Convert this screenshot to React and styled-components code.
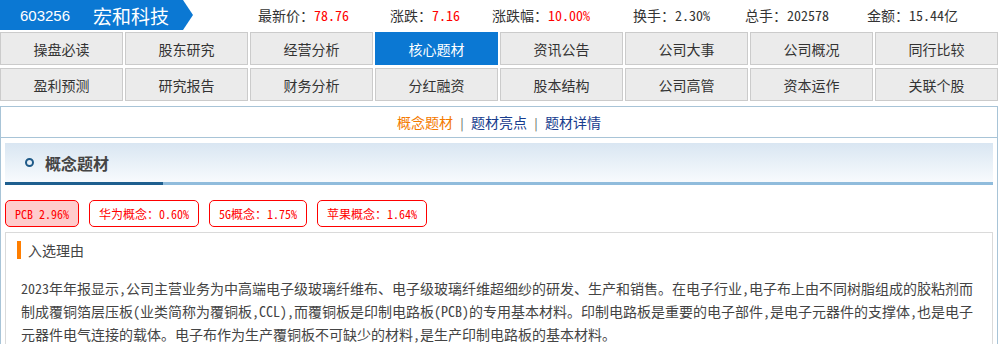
import React from "react";
import styled, { createGlobalStyle } from "styled-components";

const GlobalStyle = createGlobalStyle`
  body {
    margin: 0;
    background: #fff;
    color: #333;
    font-family: "Noto Sans CJK SC", "Noto Sans", sans-serif;
    font-size: 14px;
    font-feature-settings: "hwid";
  }
`;

const stats = [
  { label: "最新价", value: "78.76", red: true, w: 132 },
  { label: "涨跌", value: "7.16", red: true, w: 102 },
  { label: "涨跌幅", value: "10.00%", red: true, w: 141 },
  { label: "换手", value: "2.30%", w: 112 },
  { label: "总手", value: "202578", w: 122 },
  { label: "金额", value: "15.44亿", w: 120 },
];

const navItems = [
  "操盘必读", "股东研究", "经营分析", "核心题材", "资讯公告", "公司大事", "公司概况", "同行比较",
  "盈利预测", "研究报告", "财务分析", "分红融资", "股本结构", "公司高管", "资本运作", "关联个股",
];

const tags = [
  { text: "PCB 2.96%", active: true },
  { text: "华为概念：0.60%" },
  { text: "5G概念：1.75%" },
  { text: "苹果概念：1.64%" },
];

const HeaderBar = styled.div`
  display: flex;
  align-items: center;
  height: 30px;
`;

const Banner = styled.div`
  display: flex;
  align-items: center;
  width: 193px;
  height: 30px;
  background: #0b78d3;
  color: #fff;
  clip-path: polygon(0 0, 183px 0, 100% 50%, 183px 100%, 0 100%);
  flex-shrink: 0;
`;

const Code = styled.span`
  font-family: "Liberation Sans", Arial, sans-serif;
  font-size: 15px;
  margin-left: 20px;
`;

const Name = styled.span`
  font-size: 19px;
  margin-left: 23px;
`;

const Stats = styled.div`
  display: flex;
  margin-left: 65px;
`;

const Stat = styled.div`
  width: ${(p) => p.$w}px;
  white-space: nowrap;
  color: #333;
`;

const StatValue = styled.span`
  color: ${(p) => (p.$red ? "#f00" : "#333")};
`;

const Nav = styled.div`
  display: grid;
  grid-template-columns: repeat(8, 123px);
  grid-auto-rows: 33px;
  column-gap: 2px;
  row-gap: 3px;
  margin-top: 2px;
`;

const NavButton = styled.div`
  display: flex;
  align-items: center;
  justify-content: center;
  box-sizing: border-box;
  border: 1px solid ${(p) => (p.$active ? "#0b78d3" : "#cbcbcb")};
  background: ${(p) => (p.$active ? "#0b78d3" : "#ebebeb")};
  color: ${(p) => (p.$active ? "#fff" : "#333")};
  font-size: 14px;
`;

const Panel = styled.div`
  margin-top: 5px;
  width: 998px;
  box-sizing: border-box;
  border: 1px solid #a8c4d7;
  border-bottom: none;
  height: 238px;
`;

const SubTabs = styled.div`
  display: flex;
  align-items: center;
  justify-content: center;
  height: 30px;
  border-bottom: 1px solid #a8c4d7;
`;

const SubTab = styled.span`
  color: ${(p) => (p.$active ? "#f47a00" : "#173c8e")};
`;

const Divider = styled.span`
  color: #555;
  margin: 0 6px;
  font-size: 12px;
`;

const SectionHead = styled.div`
  display: flex;
  align-items: center;
  height: 42px;
  box-sizing: border-box;
  padding: 0 0 3px 20px;
  margin: 5px 4px 0;
  background:
    linear-gradient(#1f5f8f, #1f5f8f) left bottom / 158px 3px no-repeat,
    linear-gradient(#90bcdc, #90bcdc) left bottom / 100% 3px no-repeat,
    linear-gradient(#d9e6f2, #fafcfe);
`;

const Ring = styled.span`
  width: 9px;
  height: 9px;
  box-sizing: border-box;
  border: 2.5px solid #1f5a88;
  border-radius: 50%;
`;

const SectionTitle = styled.span`
  margin-left: 11px;
  font-size: 16px;
  font-weight: bold;
  color: #444;
`;

const TagRow = styled.div`
  display: flex;
  gap: 10px;
  margin: 15px 0 0 4px;
`;

const Tag = styled.span`
  height: 27px;
  line-height: 25px;
  box-sizing: border-box;
  padding: 0 9px;
  border: 1px solid #f00;
  border-radius: 5px;
  background: ${(p) => (p.$active ? "#ffcccc" : "#fff")};
  color: #f00;
  font-size: 12px;
  white-space: nowrap;
`;

const ReasonBox = styled.div`
  margin: 5px 4px 0;
  border: 1px solid #dadada;
  border-bottom: none;
  padding: 8px 11px 0;
  height: 120px;
`;

const ReasonHead = styled.div`
  display: flex;
  align-items: center;
  height: 18px;
  color: #444;
  font-size: 14px;
`;

const Bar = styled.span`
  width: 4px;
  height: 18px;
  background: #ff7e00;
  margin-right: 7px;
`;

const Paragraph = styled.p`
  margin: 18px 0 0;
  padding: 0 0 0 4px;
  line-height: 23px;
  color: #444;
  font-size: 14px;
`;

export default function App() {
  return (
    <>
      <GlobalStyle />
      <HeaderBar>
        <Banner>
          <Code>603256</Code>
          <Name>宏和科技</Name>
        </Banner>
        <Stats>
          {stats.map((s) => (
            <Stat key={s.label} $w={s.w}>
              {s.label}：<StatValue $red={s.red}>{s.value}</StatValue>
            </Stat>
          ))}
        </Stats>
      </HeaderBar>
      <Nav>
        {navItems.map((item) => (
          <NavButton key={item} $active={item === "核心题材"}>
            {item}
          </NavButton>
        ))}
      </Nav>
      <Panel>
        <SubTabs>
          <SubTab $active>概念题材</SubTab>
          <Divider>|</Divider>
          <SubTab>题材亮点</SubTab>
          <Divider>|</Divider>
          <SubTab>题材详情</SubTab>
        </SubTabs>
        <SectionHead>
          <Ring />
          <SectionTitle>概念题材</SectionTitle>
        </SectionHead>
        <TagRow>
          {tags.map((t) => (
            <Tag key={t.text} $active={t.active}>
              {t.text}
            </Tag>
          ))}
        </TagRow>
        <ReasonBox>
          <ReasonHead>
            <Bar />
            入选理由
          </ReasonHead>
          <Paragraph>
            2023年年报显示,公司主营业务为中高端电子级玻璃纤维布、电子级玻璃纤维超细纱的研发、生产和销售。在电子行业,电子布上由不同树脂组成的胶粘剂而制成覆铜箔层压板(业类简称为覆铜板,CCL),而覆铜板是印制电路板(PCB)的专用基本材料。印制电路板是重要的电子部件,是电子元器件的支撑体,也是电子元器件电气连接的载体。电子布作为生产覆铜板不可缺少的材料,是生产印制电路板的基本材料。
          </Paragraph>
        </ReasonBox>
      </Panel>
    </>
  );
}
